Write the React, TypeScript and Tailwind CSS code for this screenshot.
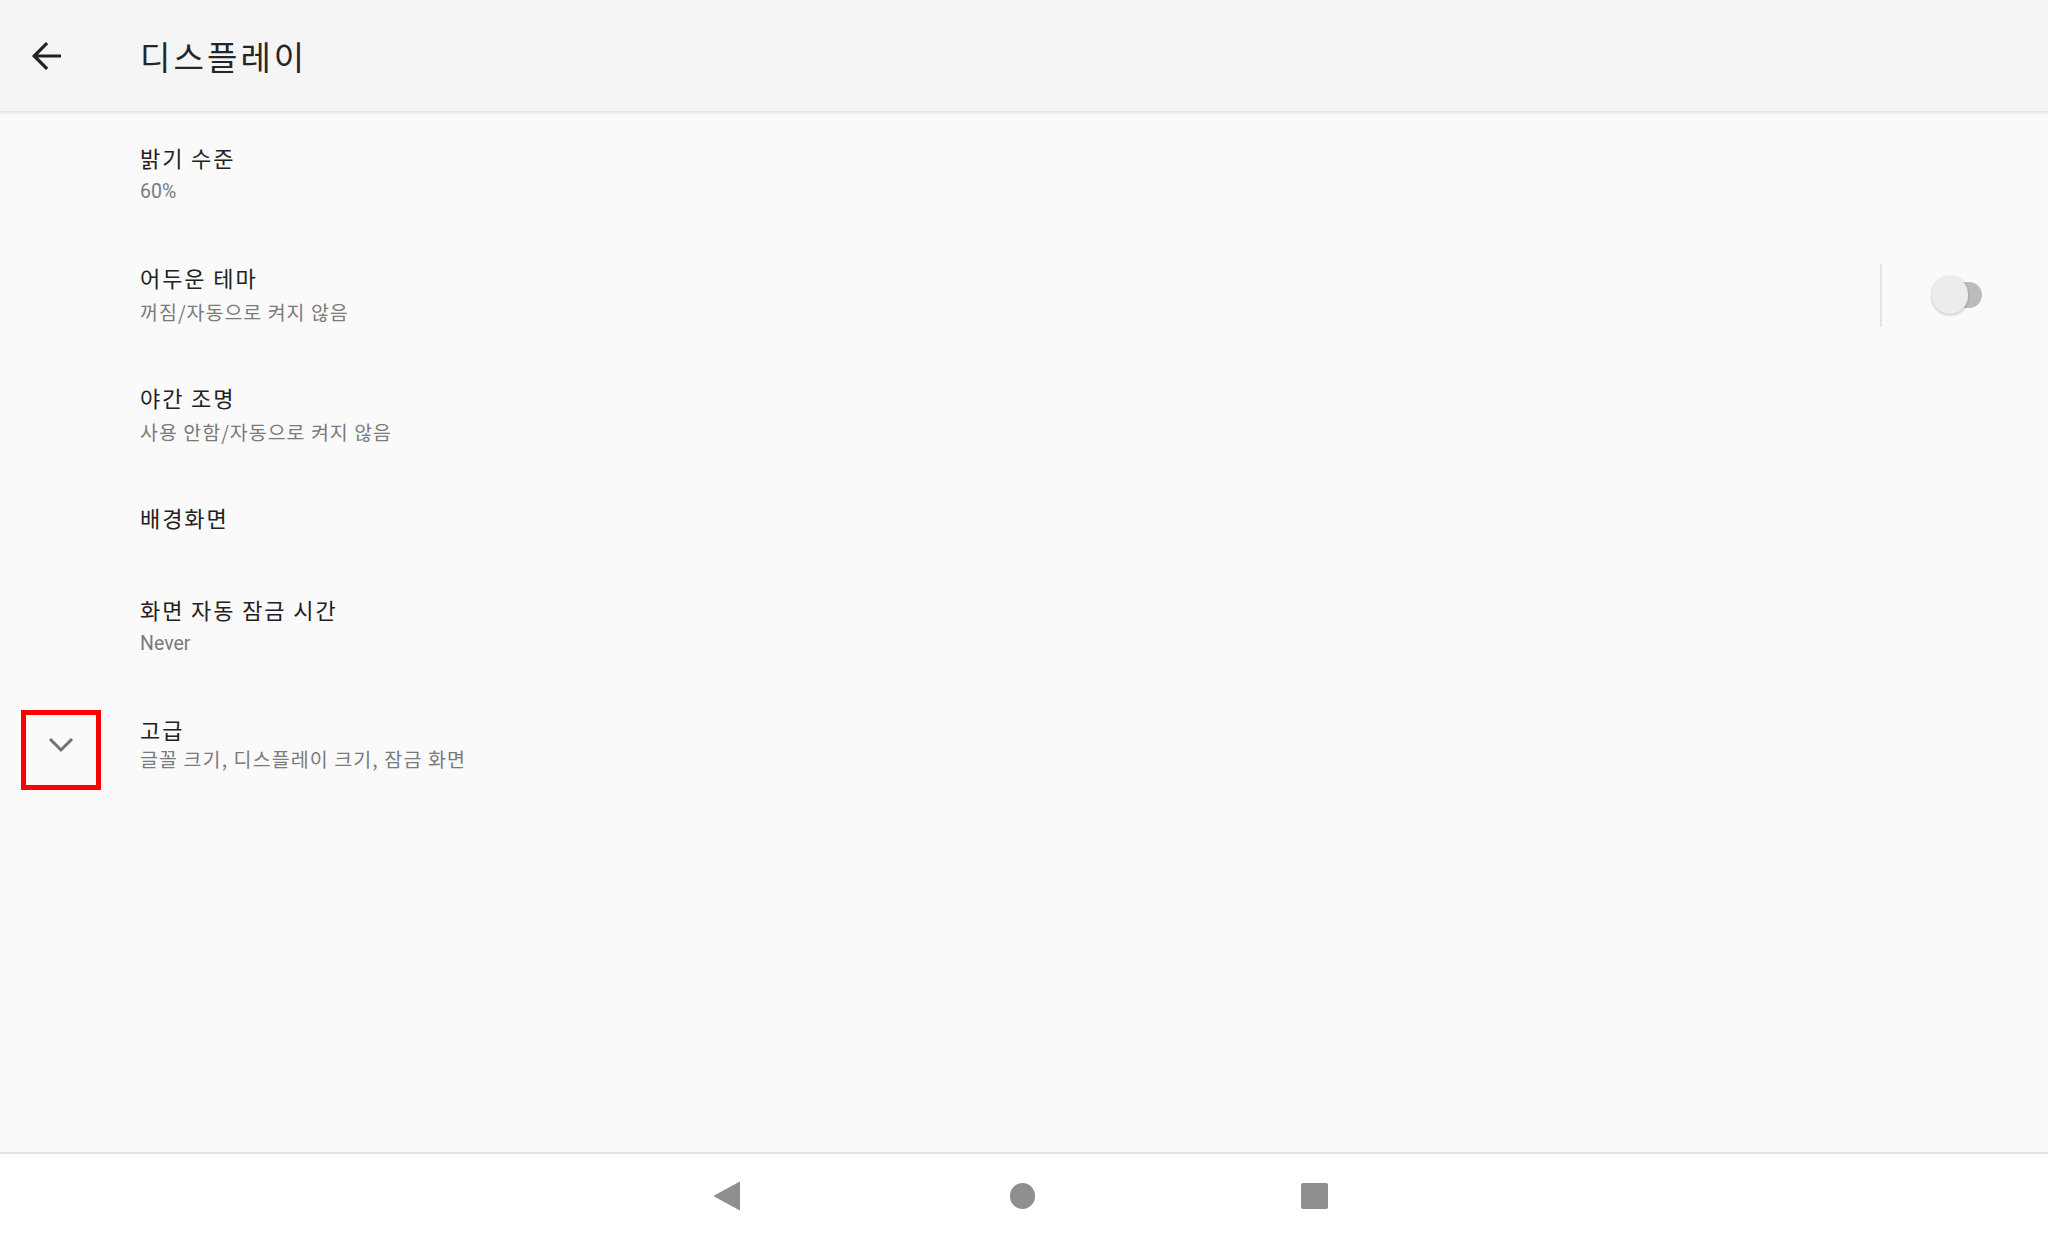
import React from "react";

const KR = { fontFamily: '"Noto Sans CJK KR", "Noto Sans CJK SC", sans-serif' };
const LATIN = { fontFamily: 'Roboto, "Noto Sans CJK KR", sans-serif' };

type Item = { title: string; summary?: string; latin?: boolean; toggle?: boolean };

const items: Item[] = [
  { title: "밝기 수준", summary: "60%", latin: true },
  { title: "어두운 테마", summary: "꺼짐/자동으로 켜지 않음", toggle: true },
  { title: "야간 조명", summary: "사용 안함/자동으로 켜지 않음" },
  { title: "배경화면" },
  { title: "화면 자동 잠금 시간", summary: "Never", latin: true },
];

function Row({ item }: { item: Item }) {
  return (
    <div
      className={
        "flex items-center pl-[140px] pr-[64px] pt-[27px] " +
        (item.summary ? "pb-[23px]" : "pb-[31px]")
      }
    >
      <div className="flex flex-1 flex-col">
        <div className="text-[22px] leading-[34px] tracking-[1.9px] text-[#212121]" style={KR}>
          {item.title}
        </div>
        {item.summary && (
          <div
            className={
              "text-[19.5px] leading-[36px] text-[#7a7a7a] " +
              (item.latin ? "tracking-normal" : "tracking-[1px]")
            }
            style={item.latin ? LATIN : KR}
          >
            {item.summary}
          </div>
        )}
      </div>
      {item.toggle && (
        <div className="flex items-center">
          <div className="h-[63px] w-[2px] bg-[#e4e4e4]" />
          <div className="relative ml-[48px] h-[40px] w-[54px]">
            <div className="absolute right-[2px] top-[7px] h-[26px] w-[44px] rounded-full bg-[#bcbcbc]" />
            <div className="absolute left-[2px] top-[1px] h-[38px] w-[36px] rounded-full bg-[#ececec] shadow-[0_1px_3px_rgba(0,0,0,0.25)]" />
          </div>
        </div>
      )}
    </div>
  );
}

export default function App() {
  return (
    <div className="flex h-[1237px] w-[2048px] flex-col bg-[#fafafa]" style={KR}>
      <header className="relative z-10 flex h-[111px] shrink-0 items-center bg-[#f5f5f5] shadow-[0_2px_3px_rgba(0,0,0,0.10)]">
        <div className="flex w-[140px] items-center pl-[31px]">
          <svg width="30" height="28" viewBox="0 0 30 28" fill="none">
            <path d="M29 14H3.5M15 2.2L3.2 14L15 25.8" stroke="#222" strokeWidth="3.2" strokeLinecap="square" />
          </svg>
        </div>
        <div className="text-[33px] leading-[40px] tracking-[3.1px] text-[#262626]">디스플레이</div>
      </header>

      <main className="flex-1 pt-[2px]">
        {items.map((it) => (
          <Row key={it.title} item={it} />
        ))}
        <div className="flex items-start pr-[64px]">
          <div className="ml-[21px] mt-[25px] flex h-[80px] w-[80px] items-center justify-center border-[5px] border-[#ff0000]">
            <svg width="26" height="16" viewBox="0 0 26 16" fill="none" className="mb-[11px]">
              <path d="M2 2L13 13L24 2" stroke="#707070" strokeWidth="3" />
            </svg>
          </div>
          <div className="ml-[39px] flex flex-col pt-[29px]">
            <div className="text-[22px] leading-[30px] tracking-[1.9px] text-[#212121]">고급</div>
            <div className="text-[19.5px] leading-[30px] tracking-[1.1px] text-[#7a7a7a]">
              글꼴 크기, 디스플레이 크기, 잠금 화면
            </div>
          </div>
        </div>
      </main>

      <nav className="flex h-[85px] shrink-0 items-center border-t-2 border-[#e3e3e3] bg-white pl-[713px]">
        <svg width="28" height="30" viewBox="0 0 28 30">
          <path d="M27 1.5V28.5Q27 29.5 26 29L1.5 15.8Q0.5 15 1.5 14.2L26 1Q27 0.5 27 1.5Z" fill="#8f8f8f" />
        </svg>
        <div className="ml-[269px] h-[26px] w-[25px] rounded-full bg-[#8f8f8f]" />
        <div className="ml-[266px] h-[26px] w-[27px] rounded-[2px] bg-[#8f8f8f]" />
      </nav>
    </div>
  );
}
